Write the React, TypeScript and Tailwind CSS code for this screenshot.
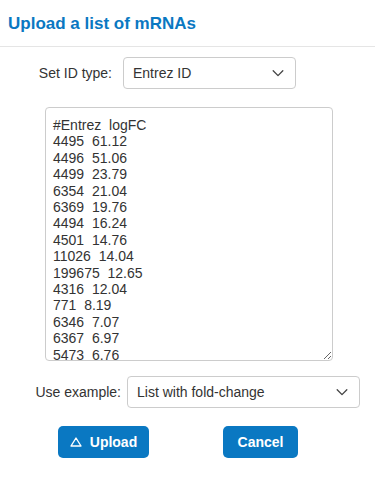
import React from "react";

const sample = `#Entrez  logFC
4495  61.12
4496  51.06
4499  23.79
6354  21.04
6369  19.76
4494  16.24
4501  14.76
11026  14.04
199675  12.65
4316  12.04
771  8.19
6346  7.07
6367  6.97
5473  6.76
3627  6.55
6373  6.42`;

function Chevron() {
  return (
    <svg width="14" height="14" viewBox="0 0 16 16" fill="none" className="text-[#444]">
      <path d="M2.5 5.5 8 11l5.5-5.5" stroke="currentColor" strokeWidth="1.5" strokeLinecap="round" strokeLinejoin="round" />
    </svg>
  );
}

function Select({ value, width }: { value: string; width: string }) {
  return (
    <div
      className={`${width} h-[32px] flex items-center justify-between border border-[#ccc] rounded-[4px] bg-white pl-[9px] pr-[10px] text-[14px] text-[#333]`}
    >
      <span>{value}</span>
      <Chevron />
    </div>
  );
}

export default function App() {
  return (
    <div className="w-[375px] h-[482px] bg-white font-['Liberation_Sans',Arial,sans-serif] text-[#333]">
      {/* Header */}
      <div className="h-[47px] border-b border-[#e5e5e5] flex items-center px-[8px]">
        <h3 className="text-[17px] font-bold text-[#0a78c2] leading-none">Upload a list of mRNAs</h3>
      </div>

      {/* Body */}
      <div className="pt-[10px]">
        <div className="flex items-center">
          <label className="w-[123px] shrink-0 text-right pr-[11px] text-[14px]">Set ID type:</label>
          <Select value="Entrez ID" width="w-[173px]" />
        </div>

        <div className="pl-[45px] pt-[18px] flex">
          <textarea
            readOnly
            defaultValue={sample}
            className="w-[288px] h-[254px] border border-[#ccc] rounded-[4px] px-[7px] pt-[9px] pb-[4px] text-[14px] leading-[16.4px] text-[#333] font-['Liberation_Sans',Arial,sans-serif] outline-none resize-y overflow-hidden"
          />
        </div>

        <div className="flex items-center mt-[15px]">
          <label className="w-[127px] shrink-0 text-right pr-[6px] text-[14px]">Use example:</label>
          <Select value="List with fold-change" width="w-[233px]" />
        </div>

        <div className="flex mt-[18px]">
          <button className="ml-[58px] w-[91px] h-[32px] rounded-[5px] bg-[#0a78c2] text-white font-bold text-[14px] flex items-center justify-center gap-[8px]">
            <svg width="12" height="10" viewBox="0 0 12 10" fill="none">
              <path d="M6 1 11 9H1Z" stroke="white" strokeWidth="1.4" strokeLinejoin="round" />
            </svg>
            Upload
          </button>
          <button className="ml-[74px] w-[75px] h-[32px] rounded-[5px] bg-[#0a78c2] text-white font-bold text-[14px]">
            Cancel
          </button>
        </div>
      </div>
    </div>
  );
}
